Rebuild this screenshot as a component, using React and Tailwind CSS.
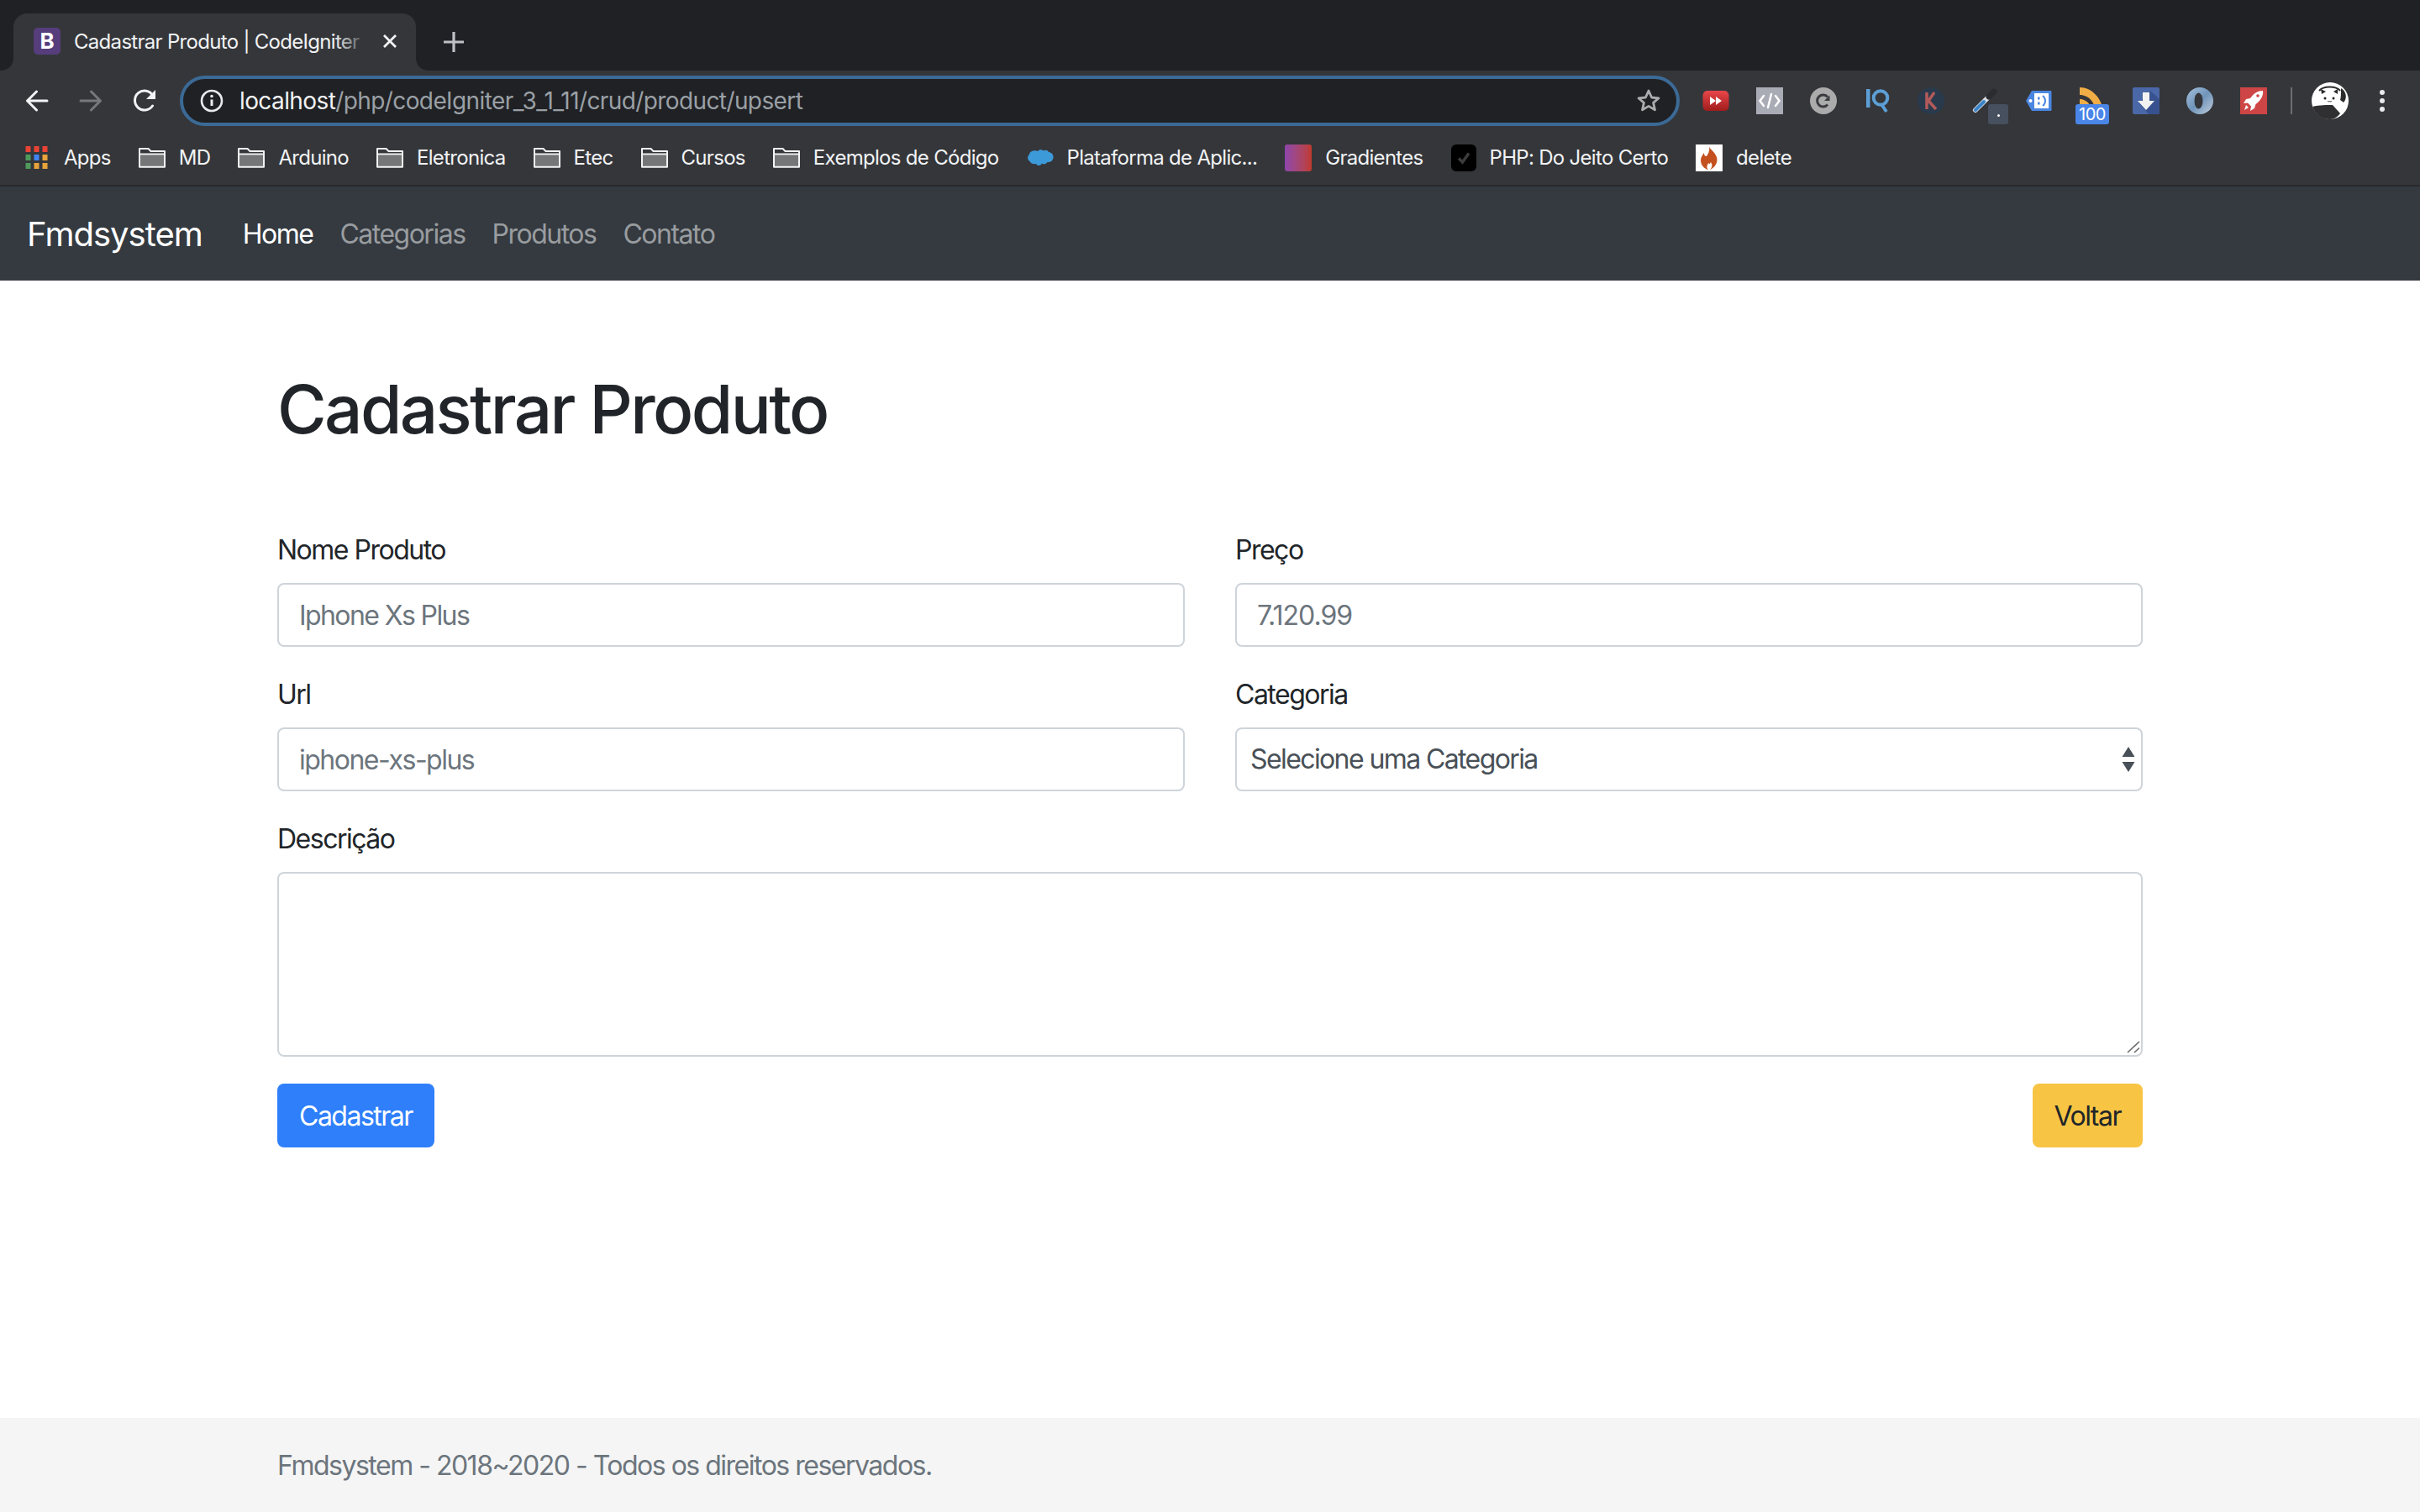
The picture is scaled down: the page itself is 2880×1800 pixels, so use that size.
import React from 'react';

function Favicon() {
  return (
    <div className="w-8 h-8 rounded-[5px] bg-[#563d7c] flex items-center justify-center text-white text-[26px] leading-none font-bold shrink-0">
      B
    </div>
  );
}

function TabFlare({ side }) {
  const d = side === 'left' ? 'M0 16 C10 16 16 10 16 0 L16 16 Z' : 'M16 16 C6 16 0 10 0 0 L0 16 Z';
  return (
    <svg width="16" height="16" viewBox="0 0 16 16" className={side === 'left' ? 'absolute bottom-0 -left-4' : 'absolute bottom-0 -right-4'}>
      <path d={d} fill="#35363a" />
    </svg>
  );
}

function NavIcon({ children }) {
  return <div className="w-16 h-[72px] flex items-center justify-center shrink-0">{children}</div>;
}

function Back({ color = '#f1f3f4', flip }) {
  return (
    <svg width="28" height="26" viewBox="0 0 28 26" fill="none" stroke={color} strokeWidth="3" strokeLinecap="round" strokeLinejoin="round" className={flip ? '-scale-x-100' : ''}>
      <path d="M26 13H3M13.5 2 2.5 13l11 11" />
    </svg>
  );
}

function Reload() {
  return (
    <svg width="30" height="28" viewBox="0 0 30 28" fill="none" className="ml-[2px]">
      <path d="M23.5 20a11.5 11.5 0 1 1 .3-12.5" stroke="#f1f3f4" strokeWidth="3" strokeLinecap="round" />
      <path d="M27 1v11H16z" fill="#f1f3f4" />
    </svg>
  );
}

function FolderIcon() {
  return (
    <svg width="32" height="24" viewBox="0 0 32 24" className="shrink-0">
      <path d="M1 22.5V1.5h10l3 3h17v18z" fill="#35363a" />
      <path d="M1.5 8.5h29v14h-29z" fill="#757678" />
      <path d="M1 22.8V1h10.5l3 3H31v18.8zM1 7.5h30" fill="none" stroke="#f1f3f4" strokeWidth="2" strokeLinejoin="round" />
    </svg>
  );
}

function AppsIcon() {
  const cells = [
    [0, 0, '#ea4335'], [10, 0, '#ea4335'], [20, 0, '#ea4335'],
    [0, 10, '#4f9a5c'], [10, 10, '#4285f4'], [20, 10, '#e8a33a'],
    [0, 20, '#4f9a5c'], [10, 20, '#e8a33a'], [20, 20, '#e8a33a'],
  ];
  return (
    <svg width="27" height="27" viewBox="0 0 26 27" className="shrink-0 mr-[3px]">
      {cells.map(([x, y, c], i) => <rect key={i} x={x} y={y} width="6" height="7" fill={c} />)}
    </svg>
  );
}

function SalesforceIcon() {
  return (
    <svg width="32" height="32" viewBox="0 0 32 32" className="shrink-0">
      <path d="M13 8c1.500-2 5-2.500 6.500-.5C21.500 6 25 6.500 26 9c3.500.5 6 3 5.500 7-.5 3.500-3.500 5.500-7 5-1.500 2.500-5 3-6.500 1.500-1 3-5.500 3.500-7 .5C7 23.500 4.500 22.500 3.500 20 .5 18.500.5 13.500 3 12c0-3.500 6-6 10-4z" fill="#3d9ad9" />
    </svg>
  );
}

function GradientIcon() {
  return <div className="w-8 h-[32px] rounded-[3px] bg-gradient-to-r from-[#8e44ad] to-[#c0392b] shrink-0" />;
}

function CheckIcon() {
  return (
    <div className="w-[30px] h-8 rounded-[6px] bg-black flex items-center justify-center shrink-0">
      <svg width="18" height="18" viewBox="0 0 18 18" fill="none">
        <path d="M3 9.500 7.500 14 15 3.500" stroke="#3c3c3c" strokeWidth="3.500" />
      </svg>
    </div>
  );
}

function FlameIcon() {
  return (
    <div className="w-8 h-8 bg-white flex items-center justify-center shrink-0">
      <svg width="22" height="28" viewBox="0 0 22 28">
        <path d="M11 0c1 4 7 7 9 13 2 7-3 13-8 15 3-3 3-6 1-9-1 2-2 3-3 1-1 3-3 5 0 8-5-1-9-6-9-11 0-4 2-6 4-9 0 3 1 4 3 4 2-3 4-7 3-12z" fill="#c4501f" />
      </svg>
    </div>
  );
}

const bookmarks = [
  { label: 'Apps', icon: <AppsIcon /> },
  { label: 'MD', icon: <FolderIcon /> },
  { label: 'Arduino', icon: <FolderIcon /> },
  { label: 'Eletronica', icon: <FolderIcon /> },
  { label: 'Etec', icon: <FolderIcon /> },
  { label: 'Cursos', icon: <FolderIcon /> },
  { label: 'Exemplos de Código', icon: <FolderIcon /> },
  { label: 'Plataforma de Aplic...', icon: <SalesforceIcon /> },
  { label: 'Gradientes', icon: <GradientIcon /> },
  { label: 'PHP: Do Jeito Certo', icon: <CheckIcon /> },
  { label: 'delete', icon: <FlameIcon /> },
];

function Extensions() {
  return (
    <div className="flex items-center ml-[11px]">
      <NavIcon>
        <svg width="32" height="26" viewBox="0 0 32 26">
          <defs>
            <linearGradient id="yt" x1="0" y1="0" x2="0" y2="1"><stop offset="0" stopColor="#e8474a" /><stop offset="1" stopColor="#a01c1c" /></linearGradient>
          </defs>
          <path d="M6 1h20c3 0 5 2 5.500 5v14c-.5 3-2.500 5-5.500 5H6c-3 0-5-2-5.500-5V6C1 3 3 1 6 1z" fill="url(#yt)" />
          <path d="M9 8l7 5-7 5zM16 8l7 5-7 5z" fill="#fff" />
        </svg>
      </NavIcon>
      <NavIcon>
        <svg width="32" height="32" viewBox="0 0 32 32">
          <rect width="32" height="32" fill="#a9abb5" />
          <path d="M9 10 4.500 16 9 22M23 10l4.500 6-4.500 6M18 8l-4 16" fill="none" stroke="#fff" strokeWidth="2.500" strokeLinecap="round" />
        </svg>
      </NavIcon>
      <NavIcon>
        <svg width="32" height="32" viewBox="0 0 32 32">
          <circle cx="16" cy="16" r="16" fill="#ababab" />
          <path d="M21 20.500a7 7 0 1 1 0-9" fill="none" stroke="#3b3c40" strokeWidth="3" />
          <path d="M23.500 9.500v6.500h-6.500z" fill="#3b3c40" />
        </svg>
      </NavIcon>
      <NavIcon>
        <svg width="30" height="30" viewBox="0 0 30 30" fill="none">
          <path d="M2 1h4.500v22H2z" fill="#5c9fd6" />
          <circle cx="19" cy="11.500" r="8.300" stroke="#5c9fd6" strokeWidth="4" />
          <path d="M20 19l6 9" stroke="#5c9fd6" strokeWidth="4" />
        </svg>
      </NavIcon>
      <NavIcon>
        <div className="w-8 h-8 rounded-full bg-[#2a3a4d] flex items-center justify-center">
          <svg width="16" height="22" viewBox="0 0 16 22" fill="none">
            <path d="M3 1v20M12 1 5 11l9 10" stroke="#b25a5a" strokeWidth="3.500" />
          </svg>
        </div>
      </NavIcon>
      <NavIcon>
        <div className="relative w-16 h-[72px]">
          <svg width="32" height="32" viewBox="0 0 32 32" fill="none" className="absolute left-[16px] top-[20px]">
            <path d="M22 10 5 27" stroke="#d7dde3" strokeWidth="6" strokeLinecap="round" />
            <path d="M15 17 5 27" stroke="#3c84c9" strokeWidth="4" strokeLinecap="round" />
            <path d="M21 11 27 5" stroke="#2b2c2f" strokeWidth="7" strokeLinecap="round" />
          </svg>
          <div className="absolute left-[36px] top-[40px] w-6 h-6 rounded-[3px] bg-[#46505e] flex items-center justify-center">
            <div className="w-[3px] h-[3px] bg-white rounded-full mt-[3px]" />
          </div>
        </div>
      </NavIcon>
      <NavIcon>
        <svg width="32" height="26" viewBox="0 0 32 26">
          <path d="M8 1h22c1 0 1.500.5 1.500 1.500v21c0 1-.5 1.500-1.500 1.500H8L1 13z" fill="#4a86e0" />
          <rect x="11" y="4" width="17" height="18" fill="#fff" />
          <circle cx="6.500" cy="13" r="2" fill="#fff" />
          <path d="M15 8.500h2.500v3H15zM15 14.500h2.500v3H15z" fill="#4a86e0" />
          <path d="M21 7c4 3 4 9 0 12" fill="none" stroke="#4a86e0" strokeWidth="2" />
        </svg>
      </NavIcon>
      <NavIcon>
        <div className="relative w-16 h-[72px]">
          <svg width="30" height="32" viewBox="0 0 30 32" className="absolute left-[16px] top-[20px]">
            <path d="M1 0c14 0 28 13 28 32h-9C20 18 12 9 1 9z" fill="#f1ad45" />
            <path d="M1 14c9 0 15 8 15 18H8c0-5-3-9-7-9z" fill="#f1ad45" />
          </svg>
          <div className="absolute left-[12px] top-[40px] w-[40px] h-6 rounded-[3px] bg-[#4a86e8] text-white text-[20px] leading-6 text-center tracking-[-0.5px]">100</div>
        </div>
      </NavIcon>
      <NavIcon>
        <svg width="32" height="32" viewBox="0 0 32 32">
          <rect width="32" height="32" rx="2" fill="#4a67a8" />
          <path d="M21 4 32 14v16a2 2 0 0 1-2 2H19L8 19z" fill="#37528f" />
          <path d="M12 6h8v10h6L16 27 6 16h6z" fill="#f2f2f2" />
        </svg>
      </NavIcon>
      <NavIcon>
        <svg width="32" height="32" viewBox="0 0 32 32" fill="none">
          <defs>
            <linearGradient id="ring" x1="0" y1="0" x2="1" y2="1"><stop offset="0" stopColor="#a9c3de" /><stop offset=".5" stopColor="#6f94ba" /><stop offset="1" stopColor="#c3cfdc" /></linearGradient>
          </defs>
          <circle cx="16" cy="16" r="16" fill="url(#ring)" />
          <ellipse cx="14.500" cy="16" rx="5" ry="9.500" fill="#35363a" />
        </svg>
      </NavIcon>
      <NavIcon>
        <svg width="32" height="32" viewBox="0 0 32 32">
          <rect width="32" height="32" fill="#cd4545" />
          <path d="M27 4c-6 0-11 3-15 9l-5 1-3 5 5-.5 4 4-1 5.500 5-3 1.500-5C24 16 28 10 27 4z" fill="#fff" />
          <circle cx="21" cy="10" r="1.800" fill="#cd4545" />
          <path d="M7 21l3 3-5 3z" fill="#fff" />
        </svg>
      </NavIcon>
      <div className="w-0.5 h-8 bg-[#6d6e71] ml-[12px] mr-[22px] shrink-0" />
      <svg width="46" height="44" viewBox="0 0 46 44" className="shrink-0">
        <circle cx="23" cy="22" r="22" fill="#fff" />
        <path d="M2 29c8-2 18-2 24-2l9 10c-3 4-7 7-12 7-10 0-18-6-21-15z" fill="#2f2f31" />
        <path d="M10 10c5-6 20-6 25 0" fill="none" stroke="#2b2b2b" strokeWidth="2" />
        <path d="M36 7c6 3 8 12 3 17l-4-3c1-3 1-8 1-14z" fill="#2b2b2b" />
        <path d="M12 8l1 6 5-3zM27 11l5-3 0 6z" fill="#2b2b2b" />
        <circle cx="17" cy="19" r="1.500" fill="#222" />
        <circle cx="27" cy="19" r="1.500" fill="#222" />
        <path d="M20 22c1 1.500 2 1.500 2.500 0 .5 1.500 2 1.500 2.500 0" fill="none" stroke="#444" strokeWidth="1" />
      </svg>
      <div className="ml-[36px] flex flex-col gap-1 shrink-0">
        <div className="w-1.5 h-1.5 rounded-full bg-[#e8eaed]" />
        <div className="w-1.5 h-1.5 rounded-full bg-[#e8eaed]" />
        <div className="w-1.5 h-1.5 rounded-full bg-[#e8eaed]" />
      </div>
    </div>
  );
}

function Field({ label, placeholder, tracking }) {
  return (
    <div className="mb-8">
      <label className="block text-[32px] leading-[50px] text-[#212529] mb-[14px] tracking-[-1.5px]">{label}</label>
      <input
        type="text"
        placeholder={placeholder}
        className={`block w-full h-[76px] px-6 bg-white border-2 border-[#ced4da] rounded-lg text-[32px] placeholder-[#6c757d] outline-none ${tracking}`}
      />
    </div>
  );
}

export default function App() {
  return (
    <div className="w-[2880px] h-[1800px] flex flex-col bg-white overflow-hidden font-['Inter',sans-serif]">
      {/* browser chrome */}
      <div className="h-[84px] bg-[#202124] pl-4 pt-4 flex items-stretch shrink-0">
        <div className="relative w-[479px] bg-[#35363a] rounded-t-2xl flex items-center pl-6 pb-[2px]">
          <TabFlare side="left" />
          <TabFlare side="right" />
          <Favicon />
          <div className="relative ml-4 w-[350px] pt-[2px] overflow-hidden whitespace-nowrap text-[24px] leading-8 text-[#f1f3f4] tracking-[-0.7px]">
            Cadastrar Produto | CodeIgniter
            <div className="absolute inset-y-0 right-0 w-10 bg-gradient-to-r from-transparent to-[#35363a]" />
          </div>
          <svg width="18" height="18" viewBox="0 0 18 18" className="ml-[17px]" fill="none">
            <path d="M2 2l14 14M16 2 2 16" stroke="#f1f3f4" strokeWidth="2.800" />
          </svg>
        </div>
        <svg width="24" height="24" viewBox="0 0 24 24" className="ml-[33px] mt-[22px]">
          <path d="M12 0v24M0 12h24" stroke="#bdc1c6" strokeWidth="3.200" />
        </svg>
      </div>

      <div className="h-[72px] bg-[#35363a] flex items-center pl-3 shrink-0">
        <NavIcon><Back /></NavIcon>
        <NavIcon><Back color="#77787a" flip /></NavIcon>
        <NavIcon><Reload /></NavIcon>
        <div className="ml-[10px] w-[1785px] h-[60px] rounded-full bg-[#202124] border-4 border-[#3b6a96] flex items-center pl-5 pr-[18px] shrink-0">
          <svg width="28" height="28" viewBox="0 0 28 28" fill="none" className="shrink-0">
            <circle cx="14" cy="14" r="12" stroke="#e8eaed" strokeWidth="2.600" />
            <path d="M14 12.500V20" stroke="#e8eaed" strokeWidth="3" />
            <circle cx="14" cy="8.500" r="1.800" fill="#e8eaed" />
          </svg>
          <span className="ml-[19px] text-[28px] text-[#f1f3f4] tracking-[-0.6px] whitespace-nowrap">
            localhost<span className="text-[#9aa0a6]">/php/codeIgniter_3_1_11/crud/product/upsert</span>
          </span>
          <svg width="30" height="30" viewBox="0 0 30 30" fill="none" className="ml-auto">
            <path d="M15 3l3.600 8 8.400.8-6.400 5.600 1.900 8.500L15 21.400 7.500 25.900l1.900-8.500L3 11.800l8.400-.8z" stroke="#abacae" strokeWidth="2.800" strokeLinejoin="round" />
          </svg>
        </div>
        <Extensions />
      </div>

      <div className="h-[66px] bg-[#35363a] border-b-2 border-[#28292c] flex items-center pl-[30px] pb-[1px] gap-[33px] shrink-0">
        {bookmarks.map((b) => (
          <div key={b.label} className="flex items-center gap-4 text-[24px] text-[#f1f3f4] tracking-[-0.7px] whitespace-nowrap">
            {b.icon}
            <span>{b.label}</span>
          </div>
        ))}
      </div>

      {/* navbar */}
      <nav className="h-[112px] bg-[#343a40] flex items-center px-8 pt-[2px] shrink-0">
        <span className="text-[40px] text-white mr-8 tracking-[-1px]">Fmdsystem</span>
        {['Home', 'Categorias', 'Produtos', 'Contato'].map((item, i) => (
          <span key={item} className={`px-4 text-[32px] tracking-[-1.5px] ${i === 0 ? 'text-white' : 'text-[#999c9f]'}`}>{item}</span>
        ))}
      </nav>

      {/* page */}
      <main className="flex-1 px-[330px]">
        <h1 className="mt-[105px] mb-[95px] text-[80px] leading-[96px] font-medium text-[#212529] tracking-[-2.6px]">Cadastrar Produto</h1>
        <div className="grid grid-cols-2 gap-x-[60px]">
          <Field label="Nome Produto" placeholder="Iphone Xs Plus" tracking="tracking-[-1.6px]" />
          <Field label="Preço" placeholder="7.120.99" tracking="tracking-[-1px]" />
          <Field label="Url" placeholder="iphone-xs-plus" tracking="tracking-[-1.5px]" />
          <div className="mb-8">
            <label className="block text-[32px] leading-[50px] text-[#212529] mb-[14px] tracking-[-1.5px]">Categoria</label>
            <div className="relative">
              <select className="block w-full h-[76px] pl-4 bg-white border-2 border-[#ced4da] rounded-lg text-[32px] text-[#495057] appearance-none outline-none tracking-[-1.6px]">
                <option>Selecione uma Categoria</option>
              </select>
              <svg width="16" height="30" viewBox="0 0 16 30" className="absolute right-[9px] top-[23px]">
                <path d="M8 0l7.500 12H.5zM8 30 .5 18h15z" fill="#495057" />
              </svg>
            </div>
          </div>
        </div>
        <label className="block text-[32px] leading-[50px] text-[#212529] mb-[14px] tracking-[-1.5px]">Descrição</label>
        <div className="relative mb-8">
          <textarea className="block w-full h-[220px] bg-white border-2 border-[#ced4da] rounded-lg outline-none resize-none" />
          <svg width="18" height="18" viewBox="0 0 18 18" fill="none" className="absolute right-[2px] bottom-[2px]">
            <path d="M2 15 16 2M10 15l6-5.500" stroke="#6b6b6b" strokeWidth="1.600" />
          </svg>
        </div>
        <div className="flex justify-between">
          <button className="h-[76px] px-[26px] pt-[2px] rounded-lg bg-[#2f7ffb] text-white text-[32px] tracking-[-1.5px]">Cadastrar</button>
          <button className="h-[76px] px-[26px] pt-[2px] rounded-lg bg-[#f7c444] text-[#212529] text-[32px] tracking-[-1.5px]">Voltar</button>
        </div>
      </main>

      <footer className="h-[112px] bg-[#f5f5f5] flex items-center px-[330px] pt-[2px] shrink-0">
        <span className="text-[32px] text-[#6c757d] tracking-[-1.5px]">Fmdsystem - 2018~2020 - Todos os direitos reservados.</span>
      </footer>
    </div>
  );
}
